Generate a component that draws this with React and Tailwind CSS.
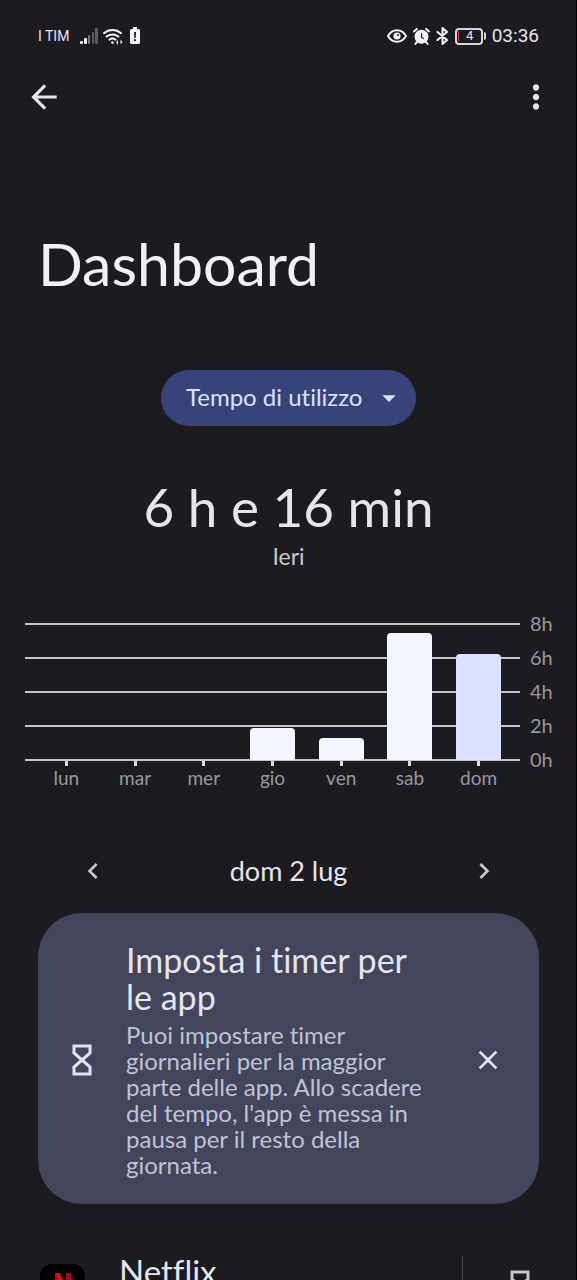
import {
  MdArrowBack, MdArrowDropDown, MdChevronLeft, MdChevronRight, MdClose, MdMoreVert,
} from "react-icons/md";

const MAX_HOURS = 8;

const hours = [8, 6, 4, 2, 0];

const days = [
  { label: "lun", value: 0 },
  { label: "mar", value: 0 },
  { label: "mer", value: 0 },
  { label: "gio", value: 1.9 },
  { label: "ven", value: 1.3 },
  { label: "sab", value: 7.5 },
  { label: "dom", value: 6.25, selected: true },
];

function SignalIcon() {
  return (
    <svg width="19" height="17" viewBox="0 0 19 17" aria-hidden="true">
      <rect x="0" y="13" width="3" height="3" rx="1" fill="#f0eff4" />
      <rect x="4" y="10" width="3" height="6" rx="1" fill="#f0eff4" />
      <rect x="8" y="7" width="2" height="9" rx="1" fill="#77777b" />
      <rect x="12" y="4" width="2" height="12" rx="1" fill="#5d5d61" />
      <rect x="15" y="0" width="3" height="16" rx="1" fill="#5d5d61" />
    </svg>
  );
}

function WifiIcon() {
  return (
    <svg width="20" height="17" viewBox="0 0 20 17" fill="none" stroke="#f0eff4" strokeWidth="2" strokeLinecap="round" aria-hidden="true">
      <path d="M1 5.2a13 13 0 0 1 17 0" />
      <path d="M3.6 8.6a9 9 0 0 1 11.8 0" />
      <path d="M6.4 11.7a4.8 4.8 0 0 1 6.2 0" />
      <circle cx="9.5" cy="14.6" r="1.4" fill="#f0eff4" stroke="none" />
      <path d="M13 14.5l2-2.5v5zM19.5 14l-2-2.5v5z" fill="#f0eff4" stroke="none" />
    </svg>
  );
}

function BatteryAlertIcon() {
  return (
    <svg width="10" height="18" viewBox="0 0 10 18" aria-hidden="true">
      <path d="M3 0h4v2h1.5A1.5 1.5 0 0 1 10 3.5v12A1.5 1.5 0 0 1 8.500 17h-7A1.5 1.5 0 0 1 0 15.5v-12A1.5 1.5 0 0 1 1.5 2H3z" fill="#f4f3f7" />
      <path d="M4 5h2l-.3 6H4.3zM4 12.3h2V14H4z" fill="#1c1b20" />
    </svg>
  );
}

function EyeIcon() {
  return (
    <svg width="20" height="14" viewBox="0 0 20 14" aria-hidden="true">
      <path d="M1 7C3.2 3.2 6.3 1.3 10 1.3S16.8 3.2 19 7c-2.2 3.8-5.3 5.7-9 5.7S3.2 10.8 1 7z" fill="none" stroke="#f4f3f7" strokeWidth="2" strokeLinejoin="round" />
      <circle cx="10" cy="7" r="3.6" fill="#f4f3f7" />
      <circle cx="11" cy="6" r="1" fill="#1c1b20" />
    </svg>
  );
}

function AlarmIcon() {
  return (
    <svg width="17" height="17" viewBox="0 0 17 17" fill="none" strokeLinecap="round" aria-hidden="true">
      <circle cx="8.5" cy="8.8" r="7" fill="#f4f3f7" />
      <path d="M1 3.4L3.8 1M16 3.4L13.2 1M3.8 14.2l-1.4 1.8M13.2 14.2l1.4 1.8" stroke="#f4f3f7" strokeWidth="2" />
      <path d="M8.5 5.5v3.6l1.8 1.5" stroke="#1c1b20" strokeWidth="1.2" />
    </svg>
  );
}

function BluetoothIcon() {
  return (
    <svg width="13" height="18" viewBox="0 0 13 18" fill="none" stroke="#f4f3f7" strokeWidth="2" strokeLinejoin="round" strokeLinecap="round" aria-hidden="true">
      <path d="M1.500 5l9.500 8-4.500 4V1L11 5l-9.500 8" />
    </svg>
  );
}

function HourglassIcon({ className }) {
  return (
    <svg width="20" height="32" viewBox="0 0 20 32" fill="none" stroke="currentColor" strokeWidth="3" className={className} aria-hidden="true">
      <path d="M2 2h16v7L2 23v7h16v-7L2 9z" />
    </svg>
  );
}

function BatteryLevel() {
  return (
    <div className="flex items-center gap-px" aria-label="Batteria 4%">
      <div className="flex h-[17px] w-7 items-center rounded border-2 border-[#d6d5da] pl-px">
        <span className="h-2.5 w-px bg-[#d4484f]" />
        <span className="flex-1 text-center font-['Roboto',sans-serif] text-[13px] leading-3">4</span>
      </div>
      <span className="h-2 w-0.5 rounded-r bg-[#d6d5da]" />
    </div>
  );
}

function StatusBar() {
  return (
    <div className="flex h-[72px] items-center justify-between px-[38px]">
      <div className="flex items-center">
        <span className="w-[42px] font-['Roboto',sans-serif] text-sm whitespace-nowrap">I TIM</span>
        <SignalIcon />
        <span className="ml-1"><WifiIcon /></span>
        <span className="ml-[7px]"><BatteryAlertIcon /></span>
      </div>
      <div className="flex items-center gap-1.5">
        <EyeIcon />
        <AlarmIcon />
        <BluetoothIcon />
        <BatteryLevel />
        <span className="font-['Roboto',sans-serif] text-[19px] leading-6">03:36</span>
      </div>
    </div>
  );
}

function UsageChart() {
  return (
    <div className="mt-[38px] px-[25px] text-[#99989d]">
      <div className="relative">
        {hours.map((h) => (
          <div key={h} className="flex h-[34px] items-center">
            <span className="h-0.5 flex-1 bg-[#c4c3c7]" />
            <span className="w-8 pb-0.5 pl-2.5 text-xl leading-6">{h}h</span>
          </div>
        ))}
        {/* Bars sit over the grid lines */}
        <div className="absolute top-[17px] right-8 bottom-[17px] left-0 grid grid-cols-7 items-end px-[7px]">
          {days.map((d) => (
            <div
              key={d.label}
              className={`mx-auto w-[45px] rounded-t ${d.selected ? "bg-[#dce1ff]" : "bg-[#f3f6ff]"}`}
              style={{ height: `${(d.value / MAX_HOURS) * 100}%` }}
            />
          ))}
        </div>
      </div>
      <div className="-mt-4 mr-8 grid grid-cols-7 px-[7px]">
        {days.map((d) => (
          <div key={d.label} className="flex flex-col items-center">
            <span className="h-[5px] w-[3px] bg-[#dddce1]" />
            <span className="text-[19px] leading-6">{d.label}</span>
          </div>
        ))}
      </div>
    </div>
  );
}

function TimerCard() {
  return (
    <section className="mx-[38px] flex items-center rounded-[44px] bg-[#43465a] pt-7 pr-[35px] pb-[26px] pl-[34px]">
      <HourglassIcon className="shrink-0 text-[#dfe1ff]" />
      <div className="ml-[34px] w-[308px]">
        <h2 className="text-[34px] leading-[37px] text-[#e6e4ec]">Imposta i timer per le app</h2>
        <p className="mt-[7px] text-2xl leading-[26px] text-[#c0c2d6]">
          Puoi impostare timer giornalieri per la maggior parte delle app. Allo scadere del tempo, l'app è messa in pausa per il resto della giornata.
        </p>
      </div>
      <button type="button" aria-label="Chiudi" className="ml-auto">
        <MdClose className="size-8 text-[#dfe1ff]" />
      </button>
    </section>
  );
}

function AppRow() {
  return (
    <div className="mt-[52px] flex items-start pr-[47px] pl-10">
      <span className="mt-2 grid size-[45px] place-items-center rounded-xl bg-black">
        <svg width="16" height="28" viewBox="0 0 16 28" aria-hidden="true">
          <path d="M0 0h5v28H0zM11 0h5v28h-5z" fill="#b1060f" />
          <path d="M0 0h5l11 28h-5z" fill="#e50914" />
        </svg>
      </span>
      <div className="ml-[34px] flex-1 text-[33px] leading-[30px]">Netflix</div>
      <span className="h-16 w-px bg-[#4a494e]" />
      <button type="button" aria-label="Imposta timer per Netflix" className="mt-3.5 ml-[47px]">
        <HourglassIcon className="text-[#c9c8cd]" />
      </button>
    </div>
  );
}

export default function App() {
  return (
    <div className="h-screen overflow-hidden bg-[#1c1b20] font-['Lato',sans-serif] text-[#e6e4ec] shadow-[inset_-1px_0_0_#000] [font-variant-ligatures:none]">
      <StatusBar />

      <header className="flex items-center justify-between pt-1.5 pr-[22px] pl-[25px]">
        <button type="button" aria-label="Indietro">
          <MdArrowBack className="size-[38px]" />
        </button>
        <button type="button" aria-label="Altre opzioni">
          <MdMoreVert className="size-[38px]" />
        </button>
      </header>

      <main>
        <h1 className="mt-28 pl-[38px] text-[59px] leading-[72px] text-[#f2f0f7]">Dashboard</h1>

        <div className="mt-[70px] flex justify-center">
          <div className="relative">
            <select
              aria-label="Tipo di dati"
              className="h-14 w-[255px] appearance-none rounded-full bg-[#38437a] pb-0.5 pl-[25px] text-2xl text-[#dce1ff]"
            >
              <option>Tempo di utilizzo</option>
            </select>
            <MdArrowDropDown className="pointer-events-none absolute top-3 right-[11px] size-8 text-[#dce1ff]" />
          </div>
        </div>

        <div className="mt-[49px] text-center">
          <div className="text-[53px] leading-[64px]">6 h e 16 min</div>
          <div className="mt-1 text-[23px] leading-[26px] text-[#c9c8cd]">Ieri</div>
        </div>

        <UsageChart />

        <div className="mt-[65px] mb-[26px] flex items-center justify-between px-[77px] text-[27px] leading-8">
          <button type="button" aria-label="Giorno precedente">
            <MdChevronLeft className="size-8 text-[#c9c8cd]" />
          </button>
          <span>dom 2 lug</span>
          <button type="button" aria-label="Giorno successivo">
            <MdChevronRight className="size-8 text-[#c9c8cd]" />
          </button>
        </div>

        <TimerCard />
        <AppRow />
      </main>
    </div>
  );
}
